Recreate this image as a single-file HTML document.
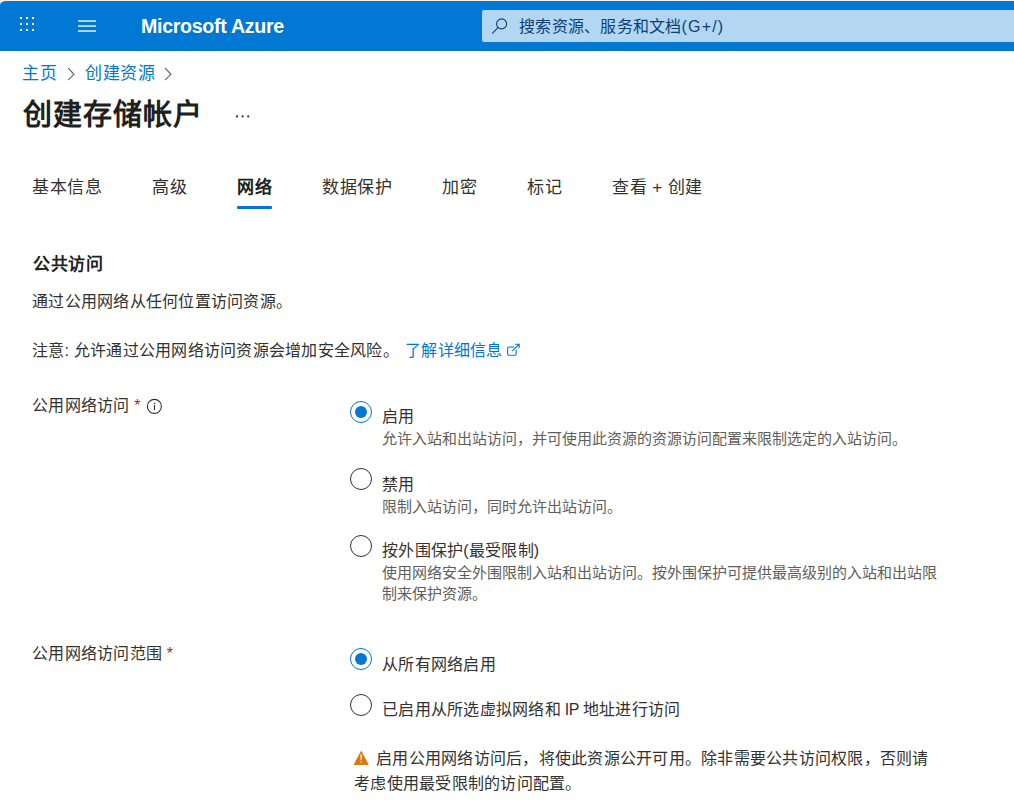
<!DOCTYPE html>
<html lang="zh-CN"><head><meta charset="utf-8">
<style>
*{margin:0;padding:0;box-sizing:border-box}
html,body{width:1014px;height:807px;overflow:hidden;background:#fff}
body{font-family:"Liberation Sans",sans-serif;color:#323130;position:relative}
.abs{position:absolute;white-space:nowrap;line-height:1}
#topline{position:absolute;left:0;top:0;width:1014px;height:1px;background:#f6efe6}
#hdr{position:absolute;left:0;top:1px;width:1014px;height:50px;background:#0078d4;border-top-left-radius:6px 4px}
#search{position:absolute;left:482px;top:10px;width:532px;height:32px;background:#b3d6f2;border-radius:2px 0 0 2px}
.brand{color:#fff;font-weight:bold;font-size:19.6px;left:141px;top:17px;letter-spacing:-0.3px}
.st{font-size:16px;letter-spacing:.25px;color:#0a3f78;left:519px;top:19px}
.bc{font-size:17px;letter-spacing:.5px;color:#0078d4;top:65px}
.title{font-size:29px;letter-spacing:1px;font-weight:bold;color:#201f1e;left:23px;top:101px}
.tab{font-size:17px;letter-spacing:.5px;color:#323130;top:179px}
.ul{position:absolute;left:237px;top:206px;width:35px;height:3px;background:#0078d4;border-radius:1px}
.t16{font-size:16px;letter-spacing:.25px;color:#323130}
.b17{font-size:17px;letter-spacing:.5px;font-weight:bold;color:#201f1e}
.link{color:#0078d4}
.req{color:#a4262c}
.radio{position:absolute;width:22px;height:22px;border-radius:50%;border:1.3px solid #323130;background:#fff}
.radio.on{border-color:#0078d4}
.radio.on::after{content:"";position:absolute;left:3.7px;top:3.7px;width:12px;height:12px;border-radius:50%;background:#0078d4}
.desc{font-size:15px;color:#605e5c}
</style></head><body>
<div id="topline"></div>
<div id="hdr"></div>
<!-- grid icon -->
<svg class="abs" style="left:0;top:0" width="40" height="40" viewBox="0 0 40 40">
<g fill="#fff">
<rect x="20" y="17" width="2" height="2"/><rect x="26" y="17" width="2" height="2"/><rect x="32" y="17" width="2" height="2"/>
<rect x="20" y="23" width="2" height="2"/><rect x="26" y="23" width="2" height="2"/><rect x="32" y="23" width="2" height="2"/>
<rect x="20" y="29" width="2" height="2"/><rect x="26" y="29" width="2" height="2"/><rect x="32" y="29" width="2" height="2"/>
</g></svg>
<!-- hamburger -->
<svg class="abs" style="left:70px;top:10px" width="32" height="30" viewBox="70 10 32 30">
<g fill="#cde3f6"><rect x="78" y="20.2" width="18" height="1.7"/><rect x="78" y="25.2" width="18" height="1.7"/><rect x="78" y="30.2" width="18" height="1.7"/></g></svg>
<div class="abs brand">Microsoft Azure</div>
<div id="search"></div>
<svg class="abs" style="left:482px;top:10px" width="40" height="32" viewBox="482 10 40 32">
<circle cx="501.6" cy="23.9" r="5" fill="none" stroke="#0a3f78" stroke-width="1.1"/>
<line x1="498" y1="27.6" x2="492.6" y2="33.2" stroke="#0a3f78" stroke-width="1.1" stroke-linecap="round"/></svg>
<div class="abs st">搜索资源、服务和文档<span style="letter-spacing:1.2px">(G+/)</span></div>

<div class="abs bc" style="left:22px">主页</div>
<div class="abs bc" style="left:85px">创建资源</div>
<svg class="abs" style="left:0;top:60px" width="200" height="25" viewBox="0 60 200 25">
<g fill="none" stroke="#605e5c" stroke-width="1.1" stroke-linecap="round" stroke-linejoin="miter">
<polyline points="68.5,68.3 74,74.3 68.5,79.7"/>
<polyline points="165.3,68.3 171,74.3 165.3,79.7"/>
</g></svg>

<div class="abs title">创建存储帐户</div>
<svg class="abs" style="left:230px;top:110px" width="24" height="12" viewBox="230 110 24 12">
<g fill="#323130"><circle cx="237" cy="116.4" r="1.1"/><circle cx="242.6" cy="116.4" r="1.1"/><circle cx="248.2" cy="116.4" r="1.1"/></g></svg>

<div class="abs tab" style="left:32px">基本信息</div>
<div class="abs tab" style="left:152px">高级</div>
<div class="abs tab" style="left:237px;font-weight:bold;color:#201f1e">网络</div>
<div class="abs tab" style="left:322px">数据保护</div>
<div class="abs tab" style="left:442px">加密</div>
<div class="abs tab" style="left:527px">标记</div>
<div class="abs tab" style="left:612px">查看 + 创建</div>
<div class="ul"></div>

<div class="abs b17" style="left:33px;top:256px">公共访问</div>
<div class="abs t16" style="left:32px;top:294px">通过公用网络从任何位置访问资源。</div>
<div class="abs t16" style="left:32px;top:343px">注意: 允许通过公用网络访问资源会增加安全风险。</div>
<div class="abs t16 link" style="left:405px;top:343px">了解详细信息</div>
<svg class="abs" style="left:500px;top:338px" width="26" height="24" viewBox="500 338 26 24">
<g fill="none" stroke="#0078d4" stroke-width="1.1" stroke-linecap="round" stroke-linejoin="round">
<path d="M514 347 H508.8 Q507.6 347 507.6 348.2 V354 Q507.6 355.2 508.8 355.2 H515 Q516.2 355.2 516.2 354 V350"/>
<path d="M512.6 350.6 L519.2 344.2 M515.4 344.2 H519.2 V347.8"/>
</g></svg>

<div class="abs t16" style="left:32px;top:398px">公用网络访问 <span class="req">*</span></div>
<svg class="abs" style="left:142px;top:394px" width="26" height="24" viewBox="142 394 26 24">
<circle cx="154.4" cy="406.4" r="7" fill="none" stroke="#323130" stroke-width="1.1"/>
<circle cx="154.5" cy="403.3" r="0.75" fill="#323130"/>
<line x1="154.5" y1="405.4" x2="154.5" y2="409.6" stroke="#323130" stroke-width="1.1" stroke-linecap="round"/></svg>

<div class="radio on" style="left:350px;top:401px"></div>
<div class="abs t16" style="left:382px;top:409px">启用</div>
<div class="abs desc" style="left:382px;top:431px">允许入站和出站访问，并可使用此资源的资源访问配置来限制选定的入站访问。</div>

<div class="radio" style="left:350px;top:468px"></div>
<div class="abs t16" style="left:382px;top:477px">禁用</div>
<div class="abs desc" style="left:382px;top:499px">限制入站访问，同时允许出站访问。</div>

<div class="radio" style="left:350px;top:535px"></div>
<div class="abs t16" style="left:382px;top:543px">按外围保护(最受限制)</div>
<div class="abs desc" style="left:382px;top:565px">使用网络安全外围限制入站和出站访问。按外围保护可提供最高级别的入站和出站限</div>
<div class="abs desc" style="left:382px;top:586px">制来保护资源。</div>

<div class="abs t16" style="left:32px;top:646px">公用网络访问范围 <span class="req">*</span></div>

<div class="radio on" style="left:350px;top:648px"></div>
<div class="abs t16" style="left:382px;top:657px">从所有网络启用</div>
<div class="radio" style="left:350px;top:694px"></div>
<div class="abs t16" style="left:382px;top:702px">已启用从所选虚拟网络和<span style="letter-spacing:-0.4px"> IP </span>地址进行访问</div>

<svg class="abs" style="left:350px;top:746px" width="22" height="22" viewBox="350 746 22 22">
<path d="M361.2 750.6 L368.6 764.4 Q368.9 765 368.2 765 L354.2 765 Q353.5 765 353.8 764.4 Z" fill="#d97a10"/>
<rect x="360.5" y="754.3" width="1.4" height="5.6" rx="0.6" fill="#fff"/><rect x="360.5" y="761.2" width="1.4" height="1.4" rx="0.6" fill="#fff"/></svg>
<div class="abs t16" style="left:376px;top:751px">启用公用网络访问后，将使此资源公开可用。除非需要公共访问权限，否则请</div>
<div class="abs t16" style="left:354px;top:776px">考虑使用最受限制的访问配置。</div>
</body></html>
